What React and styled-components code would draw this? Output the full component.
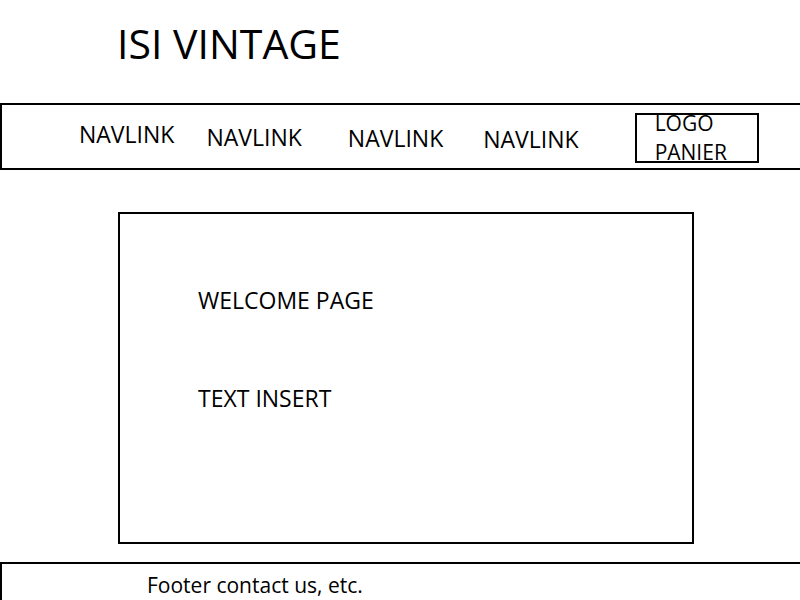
import React from 'react';
import styled, { createGlobalStyle } from 'styled-components';

const GlobalStyle = createGlobalStyle`
  html, body {
    margin: 0;
    padding: 0;
    background: #ffffff;
    overflow: hidden;
  }
  body {
    font-family: "Open Sans", "Noto Sans", sans-serif;
    color: #000000;
  }
`;

const Page = styled.div`
  width: 800px;
  height: 600px;
  display: flex;
  flex-direction: column;
  & > * {
    flex-shrink: 0;
  }
`;

const Header = styled.header`
  padding: 15px 0 0 117px;
`;

const Title = styled.h1`
  margin: 0;
  font-size: 41px;
  font-weight: 400;
  line-height: 57px;
`;

const NavBar = styled.nav`
  margin-top: 31px;
  height: 63px;
  border: 2px solid #000;
  border-right: none;
  display: flex;
  align-items: flex-start;
  padding-left: 77px;
`;

const NavLink = styled.a`
  margin-left: ${(p) => p.$left}px;
  padding-top: ${(p) => p.$top}px;
  font-size: 23px;
  line-height: 31px;
  color: #000;
  text-decoration: none;
`;

const CartBox = styled.div`
  margin: 8px 0 0 56px;
  width: 102px;
  height: 46px;
  border: 2px solid #000;
  padding-left: 18px;
  box-sizing: content-box;
`;

const CartText = styled.div`
  margin-top: -6px;
  font-size: 21px;
  line-height: 29px;
`;

const Main = styled.main`
  margin: 42px 0 0 118px;
  width: 494px;
  height: 257px;
  border: 2px solid #000;
  padding: 71px 0 0 78px;
  box-sizing: content-box;
  display: flex;
  flex-direction: column;
  gap: 67px;
`;

const Heading = styled.p`
  margin: 0;
  font-size: 23px;
  line-height: 31px;
`;

const Footer = styled.footer`
  margin-top: 18px;
  flex: 1 0 auto;
  border: 2px solid #000;
  border-right: none;
  border-bottom: none;
  padding: 7px 0 0 145px;
  font-size: 21px;
  line-height: 29px;
`;

const links = [
  { left: 0, top: 14 },
  { left: 32, top: 17 },
  { left: 46, top: 18 },
  { left: 40, top: 19 },
];

export default function App() {
  return (
    <Page>
      <GlobalStyle />
      <Header>
        <Title>ISI VINTAGE</Title>
      </Header>
      <NavBar>
        {links.map((l, i) => (
          <NavLink key={i} href="#" $left={l.left} $top={l.top}>
            NAVLINK
          </NavLink>
        ))}
        <CartBox>
          <CartText>
            LOGO
            <br />
            PANIER
          </CartText>
        </CartBox>
      </NavBar>
      <Main>
        <Heading>WELCOME PAGE</Heading>
        <Heading>TEXT INSERT</Heading>
      </Main>
      <Footer>Footer contact us, etc.</Footer>
    </Page>
  );
}
